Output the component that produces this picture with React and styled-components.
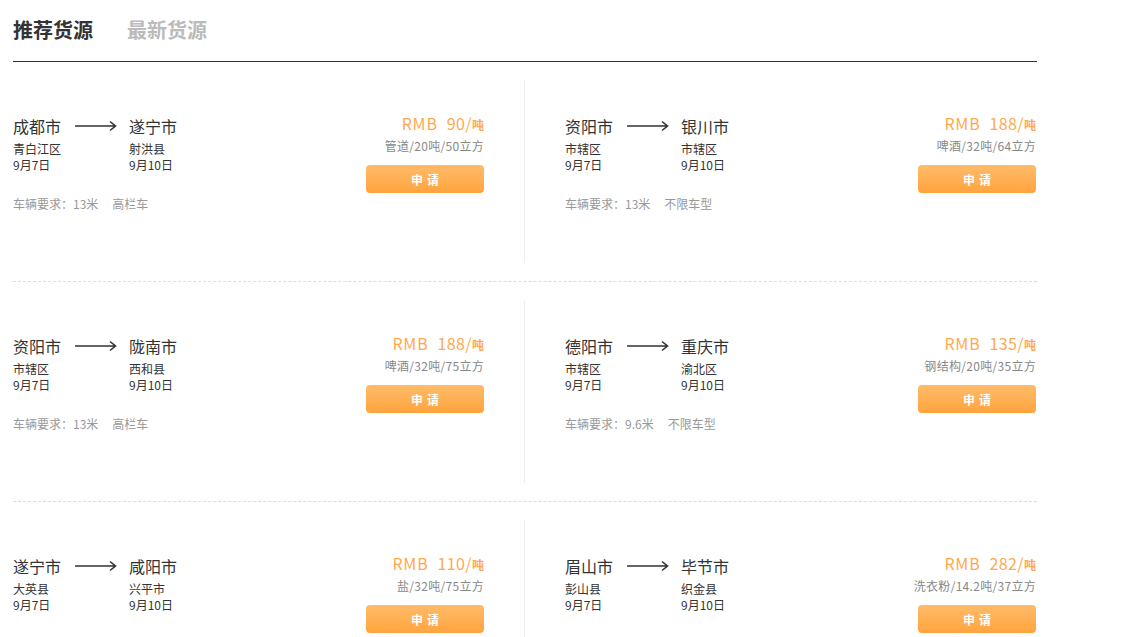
import React from "react";
import styled, { createGlobalStyle } from "styled-components";

const Global = createGlobalStyle`
  html, body { margin: 0; padding: 0; background: #fff; }
  body { font-family: "Microsoft YaHei", "Noto Sans CJK SC", sans-serif; color: #333; }
`;

const Page = styled.div`
  margin-left: 13px;
  width: 1024px;
`;

const Header = styled.div`
  display: flex;
  align-items: center;
  gap: 34px;
  height: 61px;
  border-bottom: 1px solid #333;
`;

const Tab = styled.div`
  font-size: 20px;
  font-weight: bold;
  line-height: 24px;
  margin-top: -2px;
  color: ${(p) => (p.$active ? "#333" : "#bbb")};
`;

const Row = styled.div`
  display: flex;
  padding: 18px 0;
  border-bottom: 1px dashed #ddd;
`;

const Cell = styled.div`
  box-sizing: border-box;
  width: 512px;
  height: 183px;
  display: flex;
  justify-content: space-between;
  padding: ${(p) => (p.$left ? "0 40px 0 0" : "0 1px 0 40px")};
  border-right: ${(p) => (p.$left ? "1px solid #eee" : "none")};
`;

const RouteBlock = styled.div`
  padding-top: 36px;
`;

const RouteGrid = styled.div`
  display: grid;
  grid-template-columns: 62px 54px auto;
  align-items: center;
`;

const City = styled.div`
  font-size: 16px;
  line-height: 20px;
  color: #333;
  margin-bottom: 5px;
`;

const ArrowWrap = styled.div`
  display: flex;
  align-items: center;
  height: 20px;
  margin-bottom: 5px;
`;

const Sub = styled.div`
  font-size: 12px;
  line-height: 16px;
  color: #333;
`;

const Req = styled.div`
  margin-top: 23px;
  display: flex;
  gap: 14px;
  font-size: 12px;
  line-height: 16px;
  color: #999;
`;

const PriceBlock = styled.div`
  padding-top: 33px;
  display: flex;
  flex-direction: column;
  align-items: flex-end;
`;

const Price = styled.div`
  font-size: 16px;
  line-height: 20px;
  color: #ffa852;
  letter-spacing: 0.4px;
`;

const Currency = styled.span`
  margin-right: 9px;
  letter-spacing: 0.8px;
`;

const Unit = styled.span`
  font-size: 12px;
  font-weight: bold;
  letter-spacing: 0;
`;

const Cargo = styled.div`
  margin-top: 3px;
  font-size: 12px;
  line-height: 16px;
  color: #888;
  letter-spacing: 0.3px;
`;

const ApplyButton = styled.button`
  margin-top: 11px;
  width: 118px;
  height: 28px;
  border: none;
  border-radius: 4px;
  background: linear-gradient(#ffbb6a, #ffa43d);
  color: #fff;
  font-family: inherit;
  font-size: 12px;
  font-weight: bold;
  letter-spacing: 4px;
  text-indent: 4px;
  cursor: pointer;
  padding: 0;
`;

const Arrow = () => (
  <svg width="42" height="12" viewBox="0 0 42 12">
    <path d="M0 6 H40.5 M35 1.5 L40.5 6 L35 10.5" stroke="#333" strokeWidth="1.6" fill="none" />
  </svg>
);

const data = [
  [
    { from: "成都市", to: "遂宁市", fd: "青白江区", td: "射洪县", len: "13米", type: "高栏车", price: "90", cargo: "管道/20吨/50立方" },
    { from: "资阳市", to: "银川市", fd: "市辖区", td: "市辖区", len: "13米", type: "不限车型", price: "188", cargo: "啤酒/32吨/64立方" },
  ],
  [
    { from: "资阳市", to: "陇南市", fd: "市辖区", td: "西和县", len: "13米", type: "高栏车", price: "188", cargo: "啤酒/32吨/75立方" },
    { from: "德阳市", to: "重庆市", fd: "市辖区", td: "渝北区", len: "9.6米", type: "不限车型", price: "135", cargo: "钢结构/20吨/35立方" },
  ],
  [
    { from: "遂宁市", to: "咸阳市", fd: "大英县", td: "兴平市", len: "13米", type: "高栏车", price: "110", cargo: "盐/32吨/75立方" },
    { from: "眉山市", to: "毕节市", fd: "彭山县", td: "织金县", len: "13米", type: "不限车型", price: "282", cargo: "洗衣粉/14.2吨/37立方" },
  ],
];

const Item = ({ d, left }) => (
  <Cell $left={left}>
    <RouteBlock>
      <RouteGrid>
        <City>{d.from}</City>
        <ArrowWrap><Arrow /></ArrowWrap>
        <City>{d.to}</City>
        <Sub>{d.fd}</Sub>
        <span />
        <Sub>{d.td}</Sub>
        <Sub>9月7日</Sub>
        <span />
        <Sub>9月10日</Sub>
      </RouteGrid>
      <Req>
        <span>车辆要求：{d.len}</span>
        <span>{d.type}</span>
      </Req>
    </RouteBlock>
    <PriceBlock>
      <Price><Currency>RMB</Currency>{d.price}/<Unit>吨</Unit></Price>
      <Cargo>{d.cargo}</Cargo>
      <ApplyButton>申请</ApplyButton>
    </PriceBlock>
  </Cell>
);

export default function App() {
  return (
    <>
      <Global />
      <Page>
        <Header>
          <Tab $active>推荐货源</Tab>
          <Tab>最新货源</Tab>
        </Header>
        {data.map((row, i) => (
          <Row key={i}>
            <Item d={row[0]} left />
            <Item d={row[1]} />
          </Row>
        ))}
      </Page>
    </>
  );
}
